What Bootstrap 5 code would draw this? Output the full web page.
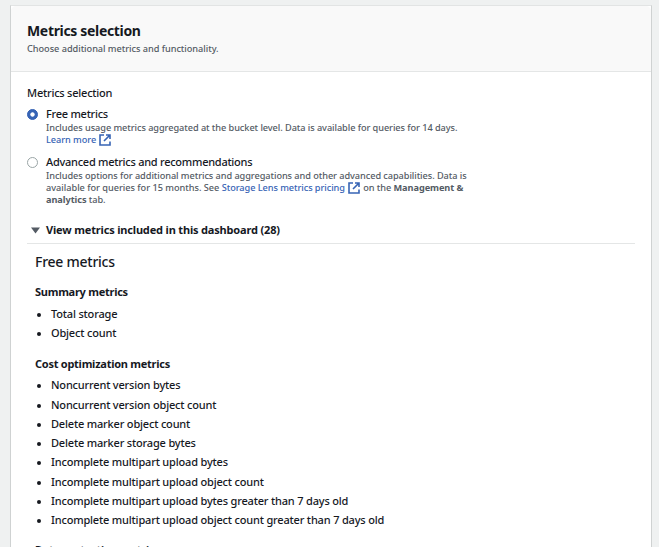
<!DOCTYPE html>
<html lang="en">
<head>
<meta charset="utf-8">
<meta name="viewport" content="width=device-width, initial-scale=1">
<title>Metrics selection</title>
<link href="https://cdn.jsdelivr.net/npm/bootstrap@5.3.0/dist/css/bootstrap.min.css" rel="stylesheet">
<style>
body{background:#eff1f1;font-family:"Noto Sans","Open Sans",sans-serif;font-size:11px;line-height:16px;color:#16191f;height:547px;overflow:hidden}
.panel{margin:5px 7px 0 10px;height:542px;overflow:hidden;border:1px solid #cfd2d2;border-top-color:#e2e4e4;border-bottom:0;border-radius:0;background:#fff}
.panel-head{height:66px;flex:none;padding:16px 16px 0;background:#f9f9f9;border-bottom:1px solid #e4e6e6;border-radius:0}
.panel-main{padding:13px 16px 0;font-weight:500}
.title{font-size:14px;line-height:18px;font-weight:700;letter-spacing:-.33px}
.note{font-size:9.2px;line-height:12px;color:#545b64;letter-spacing:-.065px}
.head-note{line-height:17px;font-weight:500;letter-spacing:-.04px}
.mlabel{letter-spacing:-.22px}
.option label{letter-spacing:-.26px}
.opt1{margin-top:5px}
.opt2{margin-top:8px}
.dot{width:11px;height:11px;border:1px solid #9aa5a6;margin:3px 8px 0 0;background:#fff;border-radius:50%;box-shadow:none;float:none}
.dot:checked,.dot:checked[type=radio]{border-color:#3764b5;background:#3764b5 radial-gradient(circle,#fff 1.8px,#3764b5 2.5px)}
.lnk{color:#3764b5;text-decoration:none}
.wide{letter-spacing:-.02px}
.ext{width:12px;height:12px;vertical-align:-3px;margin:0 1px 0 3px}
.expander{height:22px;padding-left:4px;border-bottom:1px solid #e4e6e6;font-weight:700;letter-spacing:-.17px}
.caret{margin:5px 6px 0 0}
.included{padding:9px 8px 0}
.group-title{font-size:14px;line-height:18px;font-weight:500;letter-spacing:-.25px}
.sub-title{font-size:11px;line-height:16px;font-weight:700;margin-top:13px;letter-spacing:-.26px}
.metrics{padding-left:16px;list-style:none;letter-spacing:-.18px}
.metrics li{line-height:19.25px;position:relative}
.metrics li::before{content:"";position:absolute;left:-14px;top:9px;width:4px;height:4px;border-radius:50%;background:#16191f}
.cost{margin-top:3.75px}
.last-title{margin-top:13.2px;font-size:10.5px;letter-spacing:0}
</style>
<script src="https://cdn.jsdelivr.net/npm/bootstrap@5.3.0/dist/js/bootstrap.bundle.min.js"></script>
</head>
<body>
<main class="card panel">
  <header class="card-header panel-head">
    <h2 class="title mb-0">Metrics selection</h2>
    <p class="note head-note mb-0">Choose additional metrics and functionality.</p>
  </header>
  <div class="card-body panel-main text-nowrap">
    <div class="mlabel">Metrics selection</div>
    <div class="d-flex option opt1">
      <input class="form-check-input dot flex-shrink-0" type="radio" name="tier" id="free" checked>
      <div>
        <label class="d-block" for="free">Free metrics</label>
        <div class="note">Includes usage metrics aggregated at the bucket level. Data is available for queries for 14 days.<br>
          <a class="lnk" href="#">Learn more<svg class="ext" viewBox="0 0 12 12" fill="none" stroke="currentColor" stroke-width="1.6"><path d="M5 1H1v10h10V7.500M7 1h4v4M11 1 5 7"/></svg></a></div>
      </div>
    </div>
    <div class="d-flex option opt2">
      <input class="form-check-input dot flex-shrink-0" type="radio" name="tier" id="advanced">
      <div>
        <label class="d-block" for="advanced">Advanced metrics and recommendations</label>
        <div class="note">Includes options for additional metrics and aggregations and other advanced capabilities. Data is<br>
          <span class="wide">available for queries for 15 months. See</span> <a class="lnk" href="#">Storage Lens metrics pricing<svg class="ext" viewBox="0 0 12 12" fill="none" stroke="currentColor" stroke-width="1.6"><path d="M5 1H1v10h10V7.500M7 1h4v4M11 1 5 7"/></svg></a> on the <b>Management &amp;<br>analytics</b> tab.</div>
      </div>
    </div>
    <div class="expander d-flex mt-3"><svg width="9" height="7" viewBox="0 0 9 7" class="caret"><path d="M0 .5h9L4.500 6.500z" fill="#545b64"/></svg><span>View metrics included in this dashboard (28)</span></div>
    <section class="included">
      <h3 class="group-title mb-0">Free metrics</h3>
      <h4 class="sub-title mb-0">Summary metrics</h4>
      <ul class="metrics mb-0 mt-1">
        <li>Total storage</li>
        <li>Object count</li>
      </ul>
      <h4 class="sub-title mb-0">Cost optimization metrics</h4>
      <ul class="metrics cost mb-0">
        <li>Noncurrent version bytes</li>
        <li>Noncurrent version object count</li>
        <li>Delete marker object count</li>
        <li>Delete marker storage bytes</li>
        <li>Incomplete multipart upload bytes</li>
        <li>Incomplete multipart upload object count</li>
        <li>Incomplete multipart upload bytes greater than 7 days old</li>
        <li>Incomplete multipart upload object count greater than 7 days old</li>
      </ul>
      <h4 class="sub-title last-title mb-0">Data protection metrics</h4>
    </section>
  </div>
</main>
</body>
</html>
